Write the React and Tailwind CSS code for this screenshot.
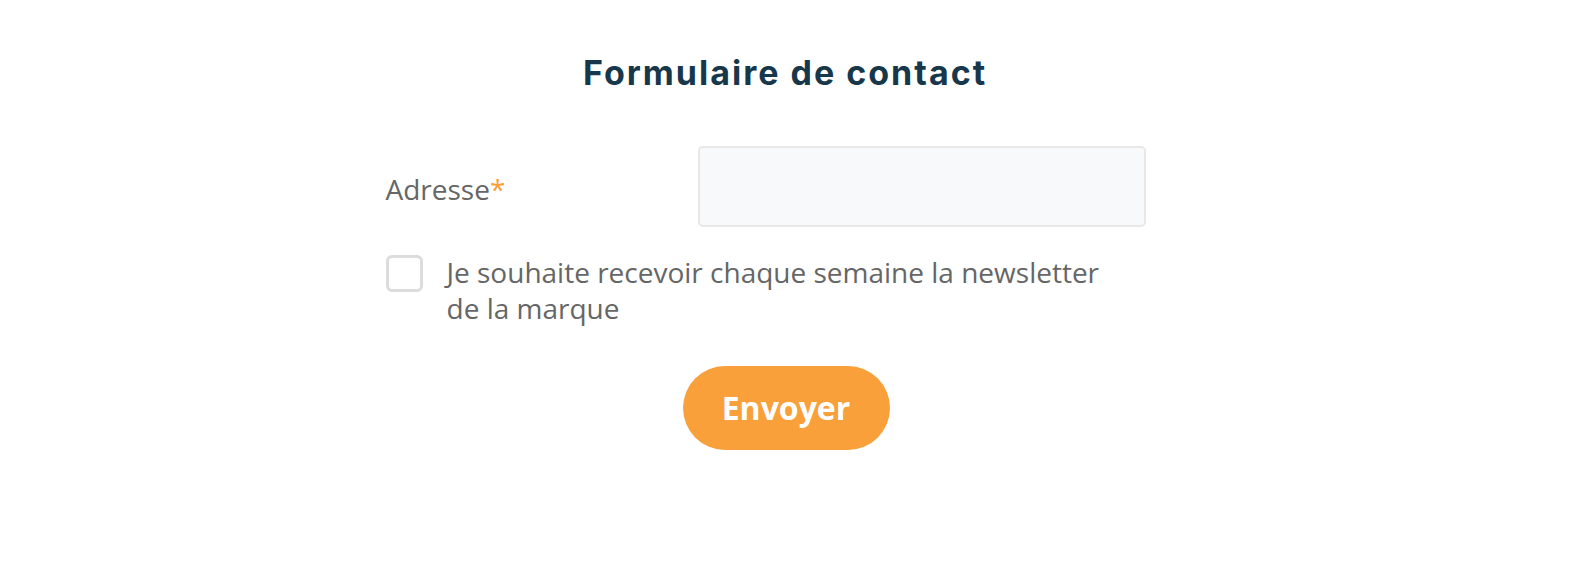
export default function App() {
  return (
    <div className="w-[1572px] h-[576px] bg-white flex flex-col items-center" style={{ fontFamily: '"Open Sans", sans-serif' }}>
      <h1 className="mt-[51px] ml-[-2px] text-[34px] leading-[44px] font-bold text-[#17374b] tracking-[2px]" style={{ fontFamily: 'Inter, "Open Sans", sans-serif' }}>
        Formulaire de contact
      </h1>
      <div className="w-[800px] ml-[-1px] mt-[51px] flex flex-col">
        <div className="flex items-center">
          <label className="w-[312px] text-[28px] text-[#666666] leading-[36px] pt-[4px]">
            Adresse<span className="text-[#f9a03a]">*</span>
          </label>
          <input type="text" className="w-[448px] h-[81px] rounded-[5px] border-2 border-[#e8e8e8] bg-[#f8f9fa] outline-none" />
        </div>
        <div className="flex items-start mt-[27px]">
          <div className="w-[37px] h-[37px] rounded-[6px] border-[3px] border-[#dcdcdc] bg-white shrink-0 mt-[1px]" />
          <p className="ml-[24px] w-[670px] text-[28px] leading-[36px] text-[#666666]">
            Je souhaite recevoir chaque semaine la newsletter de la marque
          </p>
        </div>
      </div>
      <button className="mt-[40px] w-[207px] h-[84px] rounded-full bg-[#f9a03a] text-white text-[32px] font-bold">
        Envoyer
      </button>
    </div>
  );
}
